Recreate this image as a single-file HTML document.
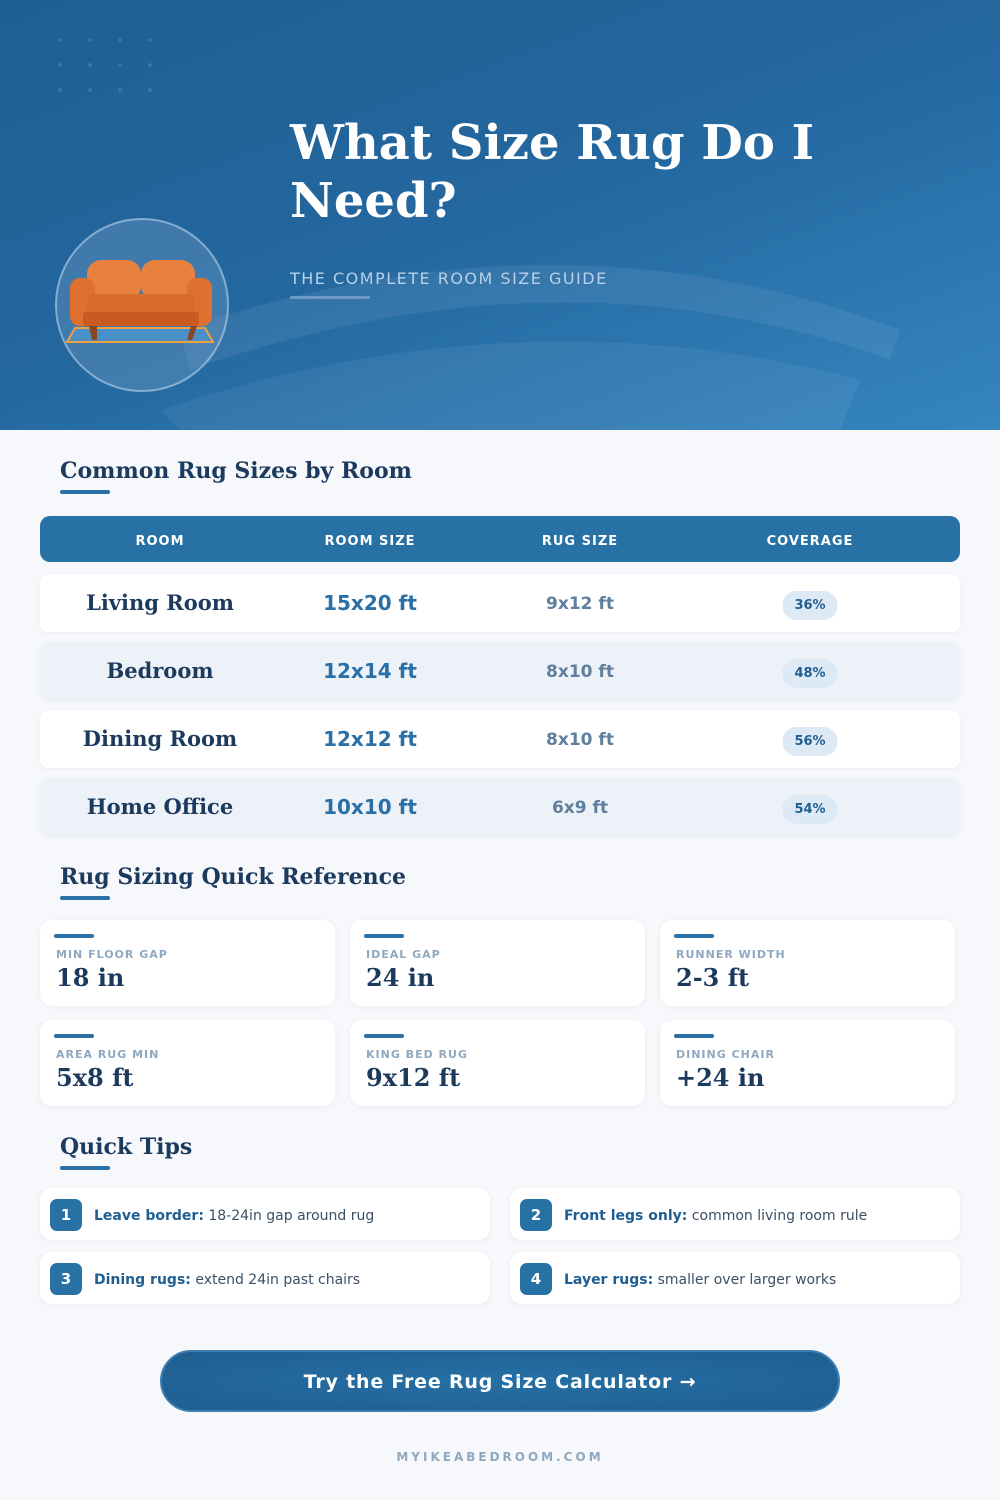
<!DOCTYPE html>
<html><head><meta charset="utf-8"><style>
*{box-sizing:border-box;margin:0;padding:0}
body{width:1000px;height:1500px;background:#f6f8fb;font-family:"DejaVu Sans","Liberation Sans",sans-serif;position:relative;overflow:hidden}
.hero{position:absolute;left:0;top:0;width:1000px;height:430px;background:linear-gradient(160deg,#1f5e92 0%,#2468a0 50%,#3585c0 100%);overflow:hidden}
.serif{font-family:"DejaVu Serif","Liberation Serif",serif;font-weight:bold}
h1{position:absolute;left:290px;top:114px;font-size:48px;line-height:58px;color:#fff;width:650px}
.sub{position:absolute;left:290px;top:269px;font-size:16px;letter-spacing:1.5px;color:#b9d0e6}
.subline{position:absolute;left:290px;top:296px;width:80px;height:3px;background:#6d9bc6;border-radius:2px}
.circle{position:absolute;left:55px;top:218px;width:174px;height:174px;border-radius:50%;background:rgba(120,160,200,.35);border:2px solid rgba(190,215,235,.55)}
.sec{position:absolute;left:60px;font-size:22px;color:#1c3a5e}
.sec:after{content:"";position:absolute;left:0;top:32px;width:50px;height:4px;border-radius:2px;background:#2a6fa6}
.thead{position:absolute;left:40px;top:516px;width:920px;height:46px;background:#2771a5;border-radius:10px}
.cell{position:absolute;text-align:center;transform:translateX(-50%);white-space:nowrap}
.th{top:18px;font-size:13px;font-weight:bold;color:#fff;letter-spacing:1px}
.row{position:absolute;left:40px;width:920px;height:58px;border-radius:8px;background:#fff;box-shadow:0 1px 4px rgba(0,0,0,.05)}
.row.alt{background:#edf2f8}
.rn{top:16px;font-size:21px;color:#1c3a5e}
.rs{top:17px;font-size:20px;font-weight:bold;color:#2a6fa6}
.rg{top:20px;font-size:17px;font-weight:bold;color:#5f7f9d}
.cv{top:17px;font-size:13px;font-weight:bold;color:#1f5e92;background:#dde9f4;border-radius:14px;padding:7px 12px}
.card{position:absolute;width:295px;height:86px;background:#fff;border-radius:12px;box-shadow:0 1px 6px rgba(0,0,0,.05)}
.card i{position:absolute;left:14px;top:14px;width:40px;height:4px;border-radius:2px;background:#2a6fa6}
.card span{position:absolute;left:16px;top:28px;font-size:11px;font-weight:bold;color:#8fa8bf;letter-spacing:1px}
.card b{position:absolute;left:16px;top:43px;font-size:24px;color:#1c3a5e}
.tip{position:absolute;width:450px;height:52px;background:#fff;border-radius:12px;box-shadow:0 1px 6px rgba(0,0,0,.05)}
.tip .n{position:absolute;left:10px;top:11px;width:32px;height:32px;border-radius:7px;background:#2771a5;color:#fff;font-weight:bold;font-size:15px;text-align:center;line-height:32px}
.tip p{position:absolute;left:54px;top:20px;font-size:14px;color:#3b4f66;white-space:nowrap}
.tip p b{color:#1f5e92}
.btn{position:absolute;left:160px;top:1350px;width:680px;height:62px;border-radius:31px;background:radial-gradient(ellipse at center,#2670a5,#1f5d90);border:2px solid #3d7eb3;color:#fff;font-weight:bold;font-size:19px;letter-spacing:.8px;text-align:center;line-height:60px}
.foot{position:absolute;left:0;width:1000px;top:1450px;text-align:center;font-size:12px;font-weight:bold;letter-spacing:3px;color:#8fa8bf}
</style></head><body>
<div class="hero">
<svg width="1000" height="430" style="position:absolute;left:0;top:0">
<g fill="rgba(255,255,255,.12)"><circle cx="60" cy="40" r="2"/><circle cx="90" cy="40" r="2"/><circle cx="120" cy="40" r="2"/><circle cx="150" cy="40" r="2"/><circle cx="60" cy="65" r="2"/><circle cx="90" cy="65" r="2"/><circle cx="120" cy="65" r="2"/><circle cx="150" cy="65" r="2"/><circle cx="60" cy="90" r="2"/><circle cx="90" cy="90" r="2"/><circle cx="120" cy="90" r="2"/><circle cx="150" cy="90" r="2"/></g>
<path d="M180 330 Q560 200 900 330 L890 360 Q560 240 190 370Z" fill="rgba(255,255,255,.07)"/>
<path d="M160 410 Q520 290 860 380 L840 430 L180 430Z" fill="rgba(255,255,255,.06)"/>
</svg>
<div class="circle"></div>
<svg width="174" height="174" style="position:absolute;left:55px;top:218px" viewBox="0 0 174 174">
<polygon points="20,110 150,110 158,124 12,124" fill="#4a90c8" stroke="#f0a040" stroke-width="2"/>
<rect x="32" y="42" width="54" height="40" rx="14" fill="#e8813e"/>
<rect x="86" y="42" width="54" height="40" rx="14" fill="#e8813e"/>
<rect x="15" y="60" width="25" height="48" rx="10" fill="#e0702f"/>
<rect x="132" y="60" width="25" height="48" rx="10" fill="#e0702f"/>
<rect x="32" y="76" width="108" height="22" rx="6" fill="#d96b2c"/>
<rect x="28" y="94" width="116" height="14" rx="3" fill="#c85a22"/>
<path d="M34 108 L37 122 L42 122 L42 108Z M136 108 L132 122 L137 122 L142 108Z" fill="#8a4620"/>
</svg>
<h1 class="serif">What Size Rug Do I Need?</h1>
<div class="sub">THE COMPLETE ROOM SIZE GUIDE</div>
<div class="subline"></div>
</div>

<div class="sec serif" style="top:458px">Common Rug Sizes by Room</div>
<div class="thead">
<div class="cell th" style="left:120px">ROOM</div>
<div class="cell th" style="left:330px">ROOM SIZE</div>
<div class="cell th" style="left:540px">RUG SIZE</div>
<div class="cell th" style="left:770px">COVERAGE</div>
</div>
<div class="row" style="top:574px"><div class="cell rn serif" style="left:120px">Living Room</div><div class="cell rs" style="left:330px">15x20 ft</div><div class="cell rg" style="left:540px">9x12 ft</div><div class="cell cv" style="left:770px">36%</div></div>
<div class="row alt" style="top:642px"><div class="cell rn serif" style="left:120px">Bedroom</div><div class="cell rs" style="left:330px">12x14 ft</div><div class="cell rg" style="left:540px">8x10 ft</div><div class="cell cv" style="left:770px">48%</div></div>
<div class="row" style="top:710px"><div class="cell rn serif" style="left:120px">Dining Room</div><div class="cell rs" style="left:330px">12x12 ft</div><div class="cell rg" style="left:540px">8x10 ft</div><div class="cell cv" style="left:770px">56%</div></div>
<div class="row alt" style="top:778px"><div class="cell rn serif" style="left:120px">Home Office</div><div class="cell rs" style="left:330px">10x10 ft</div><div class="cell rg" style="left:540px">6x9 ft</div><div class="cell cv" style="left:770px">54%</div></div>

<div class="sec serif" style="top:864px">Rug Sizing Quick Reference</div>
<div class="card" style="left:40px;top:920px"><i></i><span>MIN FLOOR GAP</span><b class="serif">18 in</b></div>
<div class="card" style="left:350px;top:920px"><i></i><span>IDEAL GAP</span><b class="serif">24 in</b></div>
<div class="card" style="left:660px;top:920px"><i></i><span>RUNNER WIDTH</span><b class="serif">2-3 ft</b></div>
<div class="card" style="left:40px;top:1020px"><i></i><span>AREA RUG MIN</span><b class="serif">5x8 ft</b></div>
<div class="card" style="left:350px;top:1020px"><i></i><span>KING BED RUG</span><b class="serif">9x12 ft</b></div>
<div class="card" style="left:660px;top:1020px"><i></i><span>DINING CHAIR</span><b class="serif">+24 in</b></div>

<div class="sec serif" style="top:1134px">Quick Tips</div>
<div class="tip" style="left:40px;top:1188px"><div class="n">1</div><p><b>Leave border:</b> 18-24in gap around rug</p></div>
<div class="tip" style="left:510px;top:1188px"><div class="n">2</div><p><b>Front legs only:</b> common living room rule</p></div>
<div class="tip" style="left:40px;top:1252px"><div class="n">3</div><p><b>Dining rugs:</b> extend 24in past chairs</p></div>
<div class="tip" style="left:510px;top:1252px"><div class="n">4</div><p><b>Layer rugs:</b> smaller over larger works</p></div>

<div class="btn">Try the Free Rug Size Calculator →</div>
<div class="foot">MYIKEABEDROOM.COM</div>
</body></html>
